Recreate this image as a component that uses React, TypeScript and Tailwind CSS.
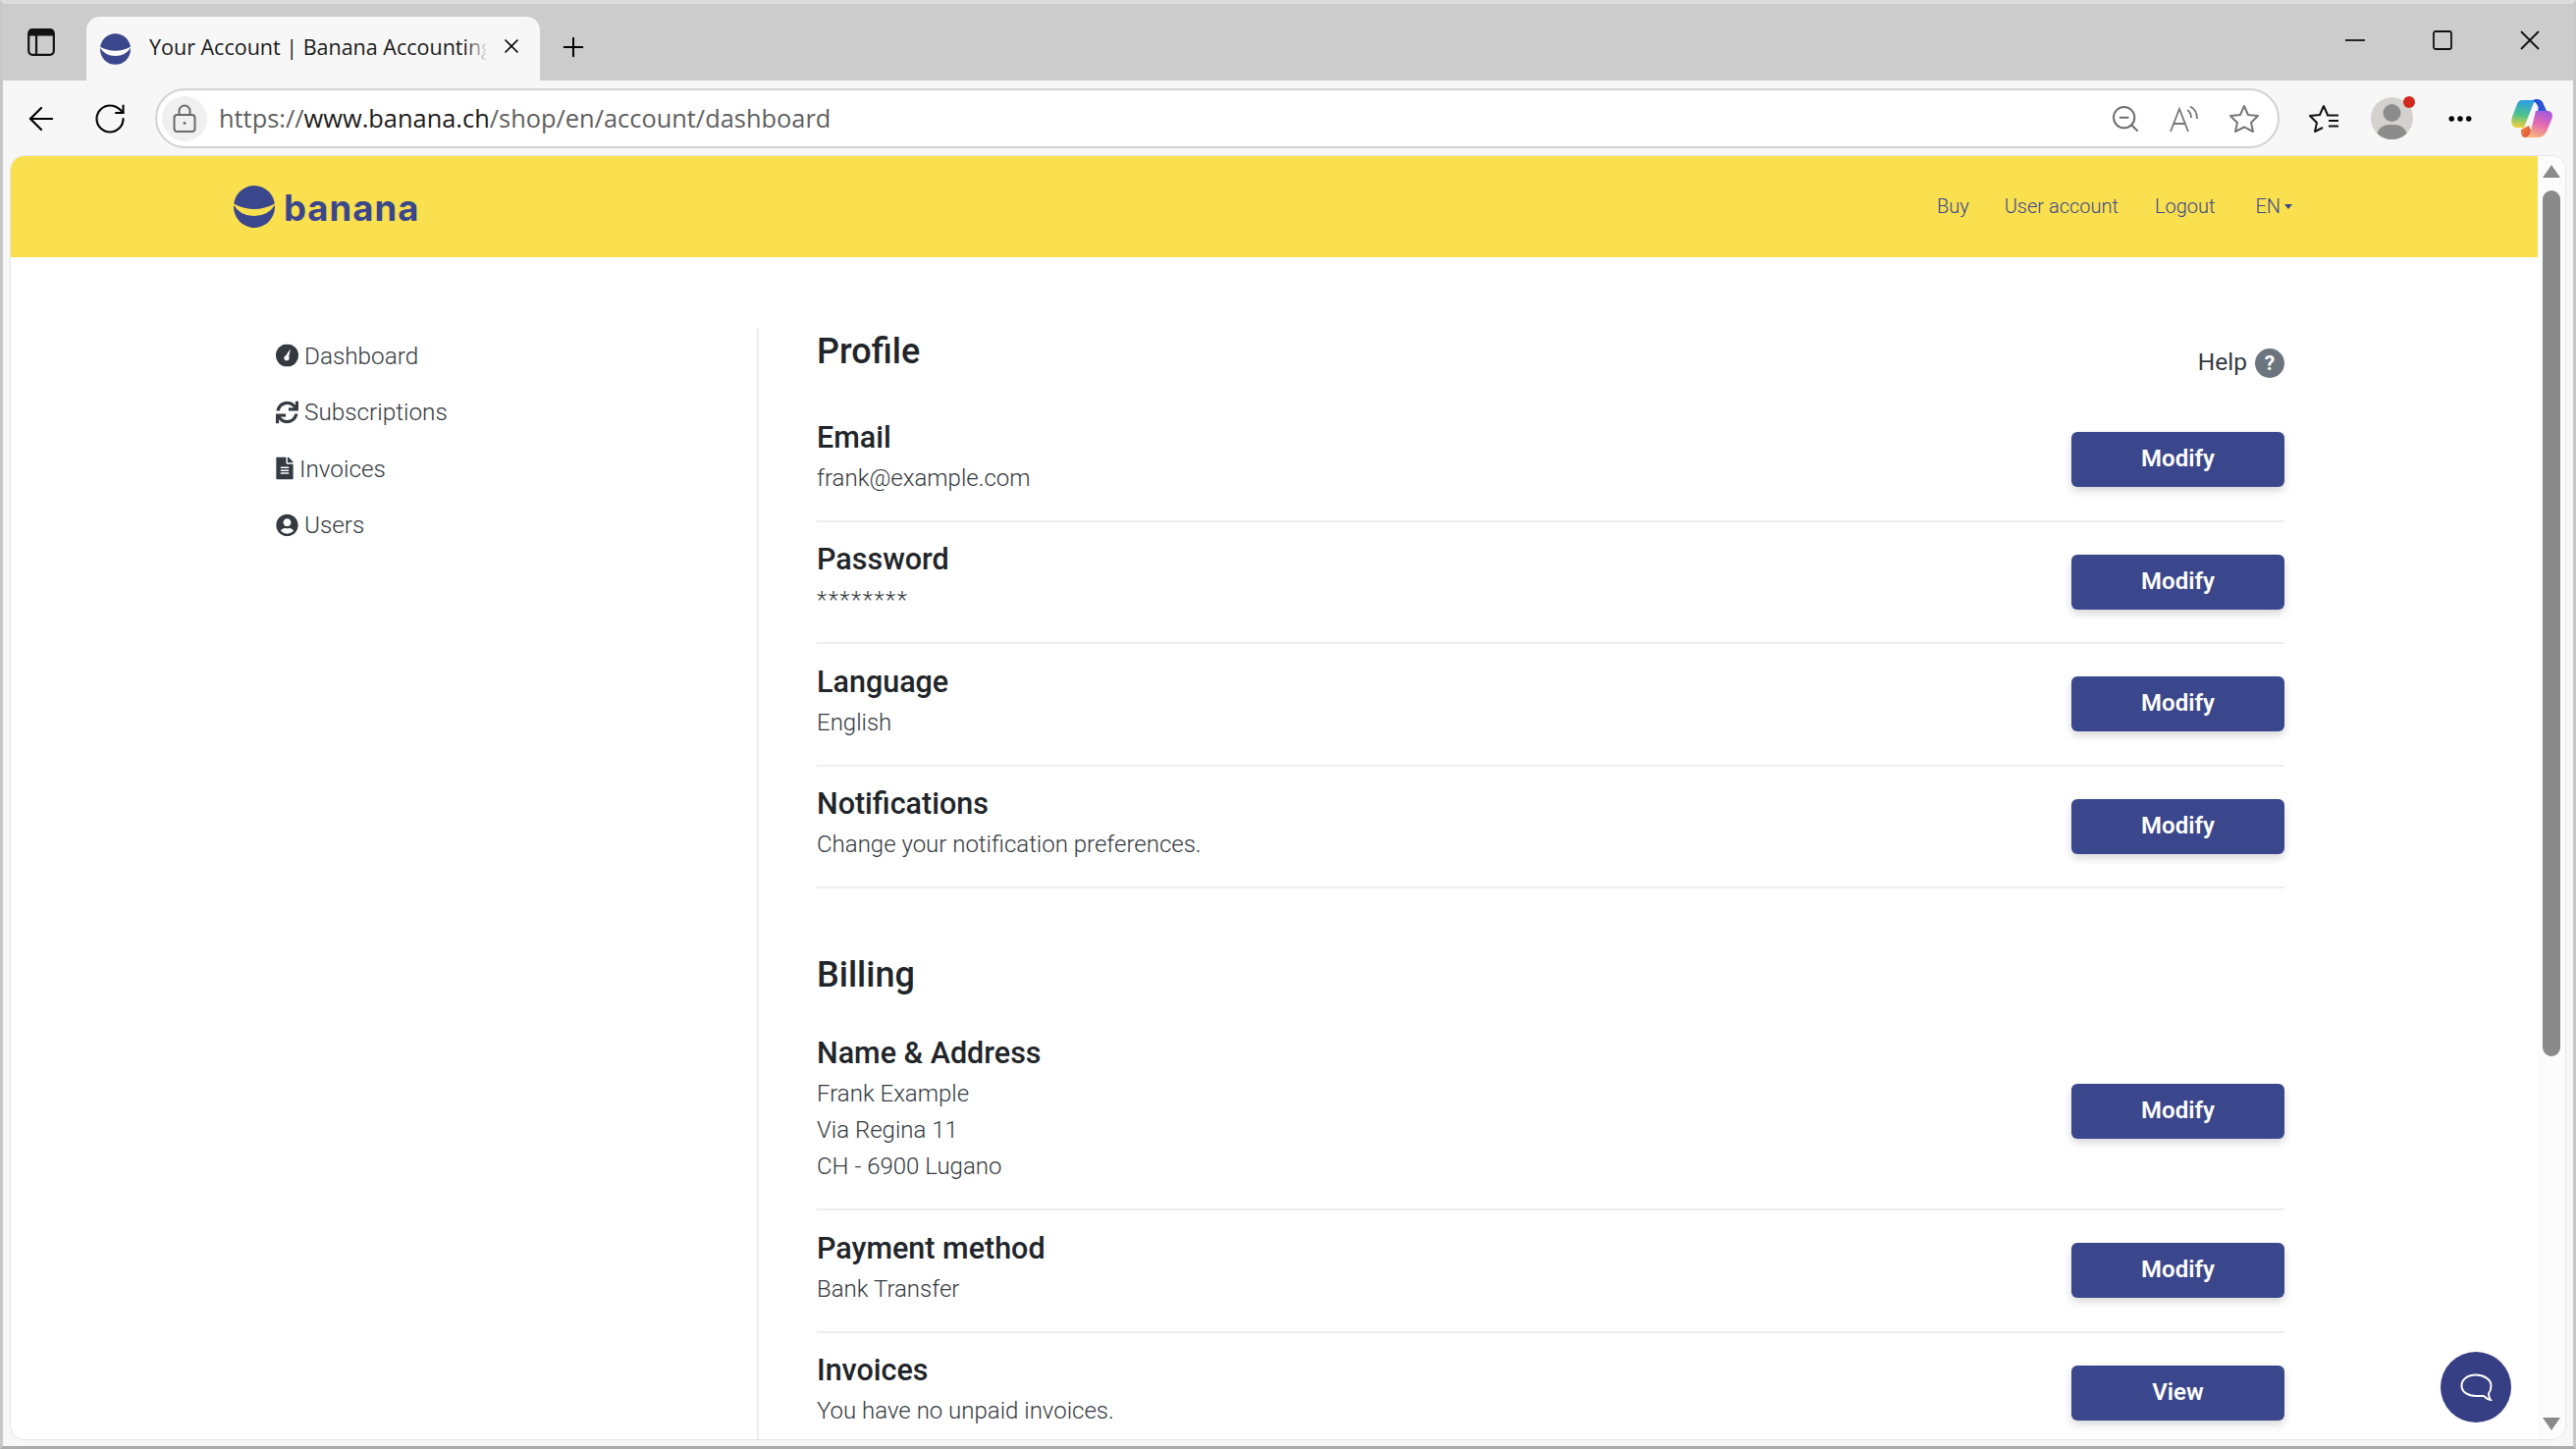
import { ArrowLeft, RotateCw, Plus, X, ZoomOut, MoreHorizontal } from 'lucide-react';
import { FaSync, FaFileAlt, FaUserCircle } from 'react-icons/fa';

function BananaMark({ className, smile }: { className: string; smile: string }) {
  return (
    <svg viewBox="0 0 42 43" className={className}>
      <ellipse cx="21" cy="21.5" rx="21" ry="21.5" fill="#3b478c" />
      <path d="M-1 18 Q21 30 43 18 Q36 31 21 31 Q6 31 -1 18Z" fill={smile} />
    </svg>
  );
}

function CopilotIcon() {
  return (
    <svg viewBox="0 0 42 41" className="w-[42px] h-[41px]">
      <defs>
        <linearGradient id="cpA" x1="0.5" y1="0" x2="0.35" y2="1">
          <stop offset="0" stopColor="#2a9be8" />
          <stop offset="0.55" stopColor="#4fc48a" />
          <stop offset="1" stopColor="#f0cf3a" />
        </linearGradient>
        <linearGradient id="cpB" x1="0" y1="0" x2="1" y2="1">
          <stop offset="0" stopColor="#1a4fd0" />
          <stop offset="1" stopColor="#3a56d8" />
        </linearGradient>
        <linearGradient id="cpC" x1="0.7" y1="0" x2="0.4" y2="1">
          <stop offset="0" stopColor="#a45adf" />
          <stop offset="0.5" stopColor="#e66ab0" />
          <stop offset="1" stopColor="#f7b27a" />
        </linearGradient>
        <linearGradient id="cpD" x1="0" y1="0" x2="1" y2="1">
          <stop offset="0" stopColor="#f4913a" />
          <stop offset="1" stopColor="#d8453c" />
        </linearGradient>
      </defs>
      <path d="M10 32 L18 28 L20 33 C19 38 17 40 14 40 C11 40 10 37 10 32Z" fill="url(#cpD)" />
      <path d="M11 2 C8 2 7 4 6 6 L1 19 C-1 25 1 30 6 30 L13 30 L22 7 C23 4 25 2 28 2 Z" fill="url(#cpA)" />
      <path d="M25 13 L37 13 C42 13 43 18 41 22 L36 34 C34 38 31 40 27 40 L14 40 C17 40 19 37 20 33 L25 13Z" fill="url(#cpC)" />
      <path d="M22 2 C26 0 30 1 32 4 L36 13 L27 13 C29 9 26 5 22 2Z" fill="url(#cpB)" />
    </svg>
  );
}

function DashboardIcon() {
  return (
    <svg viewBox="0 0 24 24" className="w-[23px] h-[23px] mr-[6px] shrink-0">
      <circle cx="12" cy="12" r="12" fill="#343a40" />
      <path d="M15.5 5 L13.8 13.6 A2.7 2.7 0 1 1 10.4 12.4 Z" fill="#fff" />
    </svg>
  );
}

function Row({ title, lines, action = 'Modify', tall }: { title: string; lines: string[]; action?: string; tall?: boolean }) {
  return (
    <div className={`flex items-center justify-between border-b-2 border-[#eeeeee] ${tall ? 'h-[200px]' : 'h-[124.5px]'}`}>
      <div className="pb-[3px]">
        <h3 className="text-[30.5px] leading-[36px] font-medium text-[#212529] mb-[5px]">{title}</h3>
        {lines.map((l) => (
          <p key={l} className={`text-[24px] leading-[37px] font-light text-[#343a40] ${l === '********' ? 'tracking-[1.5px]' : ''}`}>{l}</p>
        ))}
      </div>
      <button className="w-[217px] h-[56px] pb-[2px] rounded-[6px] bg-[#3b478c] text-white text-[24px] font-semibold shadow-[0_4px_8px_rgba(0,0,0,0.16)]">
        {action}
      </button>
    </div>
  );
}

const nav = [
  { label: 'Dashboard', icon: <DashboardIcon /> },
  { label: 'Subscriptions', icon: <FaSync className="w-[23px] h-[23px] mr-[6px] text-[#343a40]" /> },
  { label: 'Invoices', icon: <FaFileAlt className="w-[18px] h-[23px] mr-[6px] text-[#343a40]" /> },
  { label: 'Users', icon: <FaUserCircle className="w-[23px] h-[23px] mr-[6px] text-[#343a40]" /> },
];

export default function App() {
  return (
    <div className="w-[2624px] h-[1476px] overflow-hidden flex flex-col bg-[#f7f7f7] border-t-[4px] border-x-[3px] border-b-[3px] border-t-[#dcdcdc] border-x-[#c8c8c8] border-b-[#ababab] font-['Roboto',sans-serif]">
      {/* tab strip */}
      <div className="h-[78px] shrink-0 bg-[#cccccc] flex items-end font-['Open_Sans',sans-serif]">
        <div className="w-[85px] h-[78px] flex items-center pl-[25px]">
          <svg viewBox="0 0 28 28" className="w-[28px] h-[28px]" fill="none" stroke="#111" strokeWidth="2.2">
            <rect x="1.2" y="1.2" width="25.6" height="25.6" rx="4" />
            <path d="M9 7v20" />
            <path d="M1.5 4.5h25" strokeWidth="6" />
          </svg>
        </div>
        <div className="w-[462px] h-[65px] bg-[#f7f7f7] rounded-t-[14px] flex items-center pl-[14px] relative">
          <BananaMark className="w-[31px] h-[32px] shrink-0" smile="#ffffff" />
          <div className="ml-[19px] w-[345px] overflow-hidden whitespace-nowrap text-[21.5px] leading-[30px] -mt-[4px] text-[#1a1a1a] relative">
            Your Account | Banana Accounting
            <div className="absolute right-0 top-0 bottom-0 w-[24px] bg-gradient-to-r from-transparent to-[#f7f7f7]" />
          </div>
          <X className="absolute left-[421px] top-[18px] w-[24px] h-[24px] text-black" strokeWidth={1.7} />
        </div>
        <div className="h-[65px] flex items-center pl-[18px] pb-[4px]">
          <Plus className="w-[32px] h-[32px] text-black" strokeWidth={1.5} />
        </div>
        <div className="flex-1" />
        <div className="h-[78px] flex items-center gap-[69px] pr-[34px] pb-[4px]">
          <svg viewBox="0 0 20 20" className="w-[20px] h-[20px]" stroke="#111" strokeWidth="1.8"><path d="M0 10h20" /></svg>
          <svg viewBox="0 0 20 20" className="w-[20px] h-[20px]" fill="none" stroke="#111" strokeWidth="1.8"><rect x="1" y="1" width="18" height="18" rx="2" /></svg>
          <svg viewBox="0 0 20 20" className="w-[20px] h-[20px]" stroke="#111" strokeWidth="1.8"><path d="M1 1l18 18M19 1L1 19" /></svg>
        </div>
      </div>

      {/* toolbar */}
      <div className="h-[77px] shrink-0 flex items-center font-['Open_Sans',sans-serif]">
        <ArrowLeft className="ml-[20px] w-[38px] h-[38px] text-black" strokeWidth={1.4} />
        <RotateCw className="ml-[33px] w-[36px] h-[36px] text-black" strokeWidth={1.4} />
        <div className="ml-[28px] w-[2164px] h-[61px] rounded-full bg-white border-2 border-[#d2d2d2] flex items-center pl-[5px]">
          <div className="w-[46px] h-[46px] rounded-full bg-[#f0f0f0] flex items-center justify-center">
            <svg viewBox="0 0 24 30" className="w-[24px] h-[30px]" fill="none" stroke="#6a6a6a" strokeWidth="2">
              <rect x="1.5" y="11" width="21" height="17" rx="3" />
              <path d="M6.5 11V7a5.5 5.5 0 0 1 11 0v4" />
              <circle cx="12" cy="19.5" r="1.4" fill="#6a6a6a" stroke="none" />
            </svg>
          </div>
          <span className="ml-[12px] text-[25.4px] text-[#5f5f5f]">
            https://<span className="text-[#1a1a1a]">www.banana.ch</span>/shop/en/account/dashboard
          </span>
          <div className="flex-1" />
          <ZoomOut className="w-[32px] h-[32px] text-[#6e6e6e]" strokeWidth={1.5} />
          <svg viewBox="0 0 30 28" className="ml-[29px] w-[30px] h-[28px]" fill="none" stroke="#777" strokeWidth="1.8">
            <path d="M1 27 L10 4 L19 27 M4.5 19 H15.5" />
            <path d="M17 6 C20 8 21 11 21 14 M20 2.5 C25 5 27 10 27 15" transform="translate(1 -1)" />
          </svg>
          <svg viewBox="0 0 32 30" className="ml-[30px] mr-[18px] w-[32px] h-[30px]" fill="none" stroke="#777" strokeWidth="2" strokeLinejoin="round">
            <path d="M16 2 L20 11 L30 12 L23 19 L25 28 L16 23.5 L7 28 L9 19 L2 12 L12 11Z" />
          </svg>
        </div>
        <svg viewBox="0 0 32 30" className="ml-[29px] w-[32px] h-[30px]" fill="none" stroke="#111" strokeWidth="2" strokeLinejoin="round">
          <path d="M20 11 L16 2 L12 11 L2 12 L9 19 L7 28 L15 24" />
          <path d="M19 11.5 H31 M21 17 H31 M21 22.5 H31" />
        </svg>
        <div className="ml-[32px] w-[43px] h-[43px] rounded-full bg-[#d3d2cf] relative">
          <svg viewBox="0 0 43 43" className="w-[43px] h-[43px]">
            <circle cx="21.5" cy="16" r="9" fill="#8c8c8c" />
            <path d="M6.5 37 C9 29 15 28 21.5 28 C28 28 34 29 36.5 37 A21.5 21.5 0 0 1 6.5 37Z" fill="#8c8c8c" />
          </svg>
          <span className="absolute -top-[1px] -right-[2px] w-[12px] h-[12px] rounded-full bg-[#d1281f]" />
        </div>
        <MoreHorizontal className="ml-[33px] w-[30px] h-[30px] text-black" strokeWidth={2.4} />
        <div className="ml-[37px]"><CopilotIcon /></div>
      </div>

      {/* page */}
      <div className="flex-1 min-h-0 ml-[8px] mr-[8px] mb-[7px] flex bg-white rounded-[14px] overflow-hidden shadow-[0_0_0_1px_#e6e6e6] relative">
        <div className="flex-1 min-w-0 flex flex-col">
          <header className="h-[103px] shrink-0 bg-[#fae04f] flex items-center">
            <BananaMark className="ml-[227px] w-[42px] h-[43px]" smile="#fae04f" />
            <span className="ml-[9px] mt-[3px] text-[36.5px] font-bold text-[#3b478c] font-['Inter',sans-serif] tracking-[1px]">banana</span>
            <nav className="ml-auto mr-[250px] -mt-[1px] flex items-center text-[20px] font-light text-[#3b478c]">
              <span>Buy</span>
              <span className="ml-[36px]">User account</span>
              <span className="ml-[37px]">Logout</span>
              <span className="ml-[41px]">EN</span>
              <span className="ml-[4px] w-0 h-0 border-x-[4px] border-x-transparent border-t-[5px] border-t-[#3b478c]" />
            </nav>
          </header>
          <main className="flex-1 min-h-0 flex overflow-hidden">
            <aside className="w-[762px] shrink-0 mt-[72px] pl-[270px] border-r-2 border-[#eeeeee]">
              {nav.map((n) => (
                <div key={n.label} className="h-[57.6px] -translate-y-[0.5px] flex items-center text-[24.3px] font-light text-[#343a40]">
                  {n.icon}
                  {n.label}
                </div>
              ))}
            </aside>
            <div className="w-[1495px] ml-[59px] pt-[72px] shrink-0">
              <div className="h-[73px] flex justify-between items-start">
                <h2 className="text-[36px] leading-[48px] font-medium text-[#212529]">Profile</h2>
                <div className="mt-[21px] flex items-center text-[24.5px] leading-[30px] text-[#343a40]">
                  <span className="-mt-[2px]">Help</span>
                  <span className="ml-[8px] w-[30px] h-[30px] rounded-full bg-[#6c757d] text-white text-[21px] font-bold flex items-center justify-center">?</span>
                </div>
              </div>
              <Row title="Email" lines={['frank@example.com']} />
              <Row title="Password" lines={['********']} />
              <Row title="Language" lines={['English']} />
              <Row title="Notifications" lines={['Change your notification preferences.']} />
              <h2 className="mt-[64px] mb-[16px] text-[36px] leading-[48px] font-medium text-[#212529]">Billing</h2>
              <Row title="Name & Address" lines={['Frank Example', 'Via Regina 11', 'CH - 6900 Lugano']} tall />
              <Row title="Payment method" lines={['Bank Transfer']} />
              <Row title="Invoices" lines={['You have no unpaid invoices.']} action="View" />
            </div>
          </main>
        </div>
        {/* scrollbar */}
        <div className="w-[28px] shrink-0 flex flex-col items-center bg-[#fcfcfc] pt-[9px] pb-[9px]">
          <div className="w-0 h-0 border-x-[9px] border-x-transparent border-b-[13px] border-b-[#8a8a8a]" />
          <div className="mt-[13px] w-[18px] h-[882px] rounded-full bg-[#8a8a8a]" />
          <div className="flex-1" />
          <div className="w-0 h-0 border-x-[9px] border-x-transparent border-t-[13px] border-t-[#8a8a8a]" />
        </div>
        {/* chat */}
        <div className="absolute right-[55px] bottom-[17px] w-[72px] h-[72px] rounded-full bg-[#363f84] flex items-center justify-center">
          <svg viewBox="0 0 33 28" className="w-[33px] h-[28px]" fill="none" stroke="#fff" strokeWidth="2">
            <path d="M16 1.5 C8 1.5 1.5 6 1.5 12.5 C1.5 19 8 23 16 23 L24 23 C26 25 28 26.5 31 27 C29.5 25 29 23 29 20.5 C30.5 18.5 31.5 15.5 31.5 12.5 C31.5 6 24 1.5 16 1.5Z" />
          </svg>
        </div>
      </div>
    </div>
  );
}
